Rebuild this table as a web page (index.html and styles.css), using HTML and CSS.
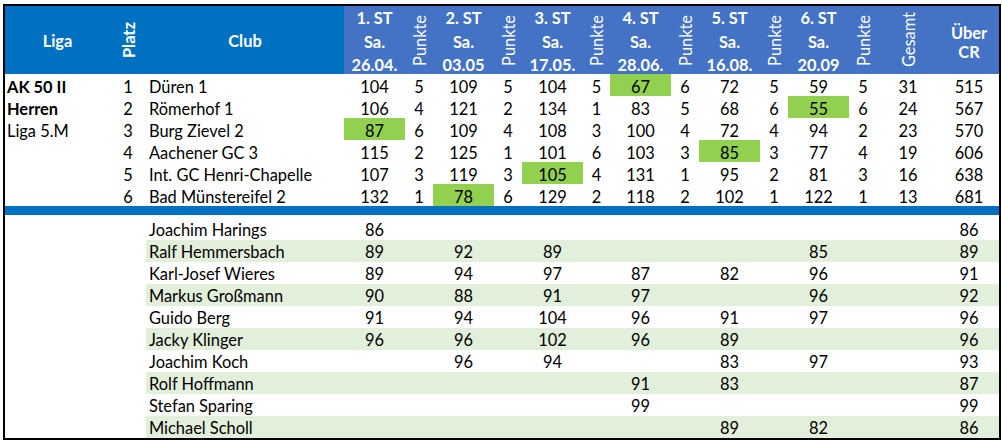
FILE: index.html
```html
<!DOCTYPE html>
<html lang="de">
<head>
<meta charset="utf-8">
<title>AK 50 II Herren Liga 5.M</title>
<link rel="stylesheet" href="styles.css">
</head>
<body>
<div class="sheet">
<table class="grid">
<colgroup>
<col class="w-liga"><col class="w-platz"><col class="w-club">
<col class="w-st"><col class="w-p"><col class="w-st"><col class="w-p"><col class="w-st"><col class="w-p27">
<col class="w-st"><col class="w-p"><col class="w-st"><col class="w-p"><col class="w-st"><col class="w-p">
<col class="w-ges"><col class="w-cr">
</colgroup>
<thead>
<tr class="head">
<th class="dk">Liga</th>
<th class="dk"><span class="rot">Platz</span></th>
<th class="dk">Club</th>
<th class="lt st"><div class="stack">1. ST<br>Sa.<br>26.04.</div></th>
<th class="lt"><span class="rot thin">Punkte</span></th>
<th class="lt st"><div class="stack">2. ST<br>Sa.<br>03.05</div></th>
<th class="lt"><span class="rot thin">Punkte</span></th>
<th class="lt st"><div class="stack">3. ST<br>Sa.<br>17.05.</div></th>
<th class="lt"><span class="rot thin">Punkte</span></th>
<th class="lt st"><div class="stack">4. ST<br>Sa.<br>28.06.</div></th>
<th class="lt"><span class="rot thin">Punkte</span></th>
<th class="lt st"><div class="stack">5. ST<br>Sa.<br>16.08.</div></th>
<th class="lt"><span class="rot thin">Punkte</span></th>
<th class="lt st"><div class="stack">6. ST<br>Sa.<br>20.09</div></th>
<th class="lt"><span class="rot thin">Punkte</span></th>
<th class="lt"><span class="rot thin">Gesamt</span></th>
<th class="lt cr">Über<br>CR</th>
</tr>
</thead>
<tbody class="teams">
<tr><td class="liga b">AK 50 II</td><td>1</td><td class="name">Düren 1</td><td>104</td><td>5</td><td>109</td><td>5</td><td>104</td><td>5</td><td class="hl">67</td><td>6</td><td>72</td><td>5</td><td>59</td><td>5</td><td>31</td><td>515</td></tr>
<tr><td class="liga b">Herren</td><td>2</td><td class="name">Römerhof 1</td><td>106</td><td>4</td><td>121</td><td>2</td><td>134</td><td>1</td><td>83</td><td>5</td><td>68</td><td>6</td><td class="hl">55</td><td>6</td><td>24</td><td>567</td></tr>
<tr><td class="liga">Liga 5.M</td><td>3</td><td class="name">Burg Zievel 2</td><td class="hl">87</td><td>6</td><td>109</td><td>4</td><td>108</td><td>3</td><td>100</td><td>4</td><td>72</td><td>4</td><td>94</td><td>2</td><td>23</td><td>570</td></tr>
<tr><td class="liga"></td><td>4</td><td class="name">Aachener GC 3</td><td>115</td><td>2</td><td>125</td><td>1</td><td>101</td><td>6</td><td>103</td><td>3</td><td class="hl">85</td><td>3</td><td>77</td><td>4</td><td>19</td><td>606</td></tr>
<tr><td class="liga"></td><td>5</td><td class="name">Int. GC Henri-Chapelle</td><td>107</td><td>3</td><td>119</td><td>3</td><td class="hl">105</td><td>4</td><td>131</td><td>1</td><td>95</td><td>2</td><td>81</td><td>3</td><td>16</td><td>638</td></tr>
<tr><td class="liga"></td><td>6</td><td class="name">Bad Münstereifel 2</td><td>132</td><td>1</td><td class="hl">78</td><td>6</td><td>129</td><td>2</td><td>118</td><td>2</td><td>102</td><td>1</td><td>122</td><td>1</td><td>13</td><td>681</td></tr>
</tbody>
<tbody class="players">
<tr class="bar"><td colspan="17"></td></tr>
<tr class="first"><td></td><td></td><td class="name">Joachim Harings</td><td>86</td><td></td><td></td><td></td><td></td><td></td><td></td><td></td><td></td><td></td><td></td><td></td><td></td><td>86</td></tr>
<tr class="stripe"><td></td><td></td><td class="name">Ralf Hemmersbach</td><td>89</td><td></td><td>92</td><td></td><td>89</td><td></td><td></td><td></td><td></td><td></td><td>85</td><td></td><td></td><td>89</td></tr>
<tr><td></td><td></td><td class="name">Karl-Josef Wieres</td><td>89</td><td></td><td>94</td><td></td><td>97</td><td></td><td>87</td><td></td><td>82</td><td></td><td>96</td><td></td><td></td><td>91</td></tr>
<tr class="stripe"><td></td><td></td><td class="name">Markus Großmann</td><td>90</td><td></td><td>88</td><td></td><td>91</td><td></td><td>97</td><td></td><td></td><td></td><td>96</td><td></td><td></td><td>92</td></tr>
<tr><td></td><td></td><td class="name">Guido Berg</td><td>91</td><td></td><td>94</td><td></td><td>104</td><td></td><td>96</td><td></td><td>91</td><td></td><td>97</td><td></td><td></td><td>96</td></tr>
<tr class="stripe"><td></td><td></td><td class="name">Jacky Klinger</td><td>96</td><td></td><td>96</td><td></td><td>102</td><td></td><td>96</td><td></td><td>89</td><td></td><td></td><td></td><td></td><td>96</td></tr>
<tr><td></td><td></td><td class="name">Joachim Koch</td><td></td><td></td><td>96</td><td></td><td>94</td><td></td><td></td><td></td><td>83</td><td></td><td>97</td><td></td><td></td><td>93</td></tr>
<tr class="stripe"><td></td><td></td><td class="name">Rolf Hoffmann</td><td></td><td></td><td></td><td></td><td></td><td></td><td>91</td><td></td><td>83</td><td></td><td></td><td></td><td></td><td>87</td></tr>
<tr><td></td><td></td><td class="name">Stefan Sparing</td><td></td><td></td><td></td><td></td><td></td><td></td><td>99</td><td></td><td></td><td></td><td></td><td></td><td></td><td>99</td></tr>
<tr class="stripe"><td></td><td></td><td class="name">Michael Scholl</td><td></td><td></td><td></td><td></td><td></td><td></td><td></td><td></td><td>89</td><td></td><td>82</td><td></td><td></td><td>86</td></tr>
</tbody>
</table>
</div>
</body>
</html>
```
FILE: styles.css
```css
html, body {
  margin: 0;
  padding: 0;
  background: #ffffff;
}

body {
  font-family: Lato, "Open Sans", sans-serif;
  color: #000000;
}

.sheet {
  margin: 4px 0 0 3px;
  width: 994px;
  border: 2px solid #000000;
}

.grid {
  width: 994px;
  table-layout: fixed;
  border-collapse: collapse;
  border-spacing: 0;
}

.w-liga { width: 105px; }
.w-platz { width: 36px; }
.w-club { width: 198px; }
.w-st { width: 61px; }
.w-p { width: 28px; }
.w-p27 { width: 27px; }
.w-ges { width: 62px; }
.w-cr { width: 60px; }

.grid th,
.grid td {
  padding: 0;
  font-size: 16.4px;
  line-height: 19px;
  white-space: nowrap;
  text-align: center;
  overflow: visible;
}

/* header */
.head { height: 68px; }

.head th {
  color: #ffffff;
  font-weight: 700;
  vertical-align: middle;
}

.dk { background: #0070c0; }
.lt { background: #4472c4; }

.head th.st {
  vertical-align: top;
}

.stack {
  height: 68px;
  line-height: 23.6px;
}

.cr {
  line-height: 22px;
  padding-top: 4px !important;
}

.rot {
  display: inline-block;
  writing-mode: vertical-rl;
  transform: rotate(180deg);
  line-height: 19px;
  vertical-align: middle;
}

.thin { font-weight: 400; }

/* body rows */
.grid td {
  vertical-align: bottom;
}

.teams tr { height: 22px; }
.teams td { padding-bottom: 0; }

.players tr { height: 22px; }
.players td { padding-bottom: 1px; }
.players tr.first { height: 25px; }

.players tr.bar { height: 9px; }
.players tr.bar td {
  background: #0070c0;
  padding: 0;
  font-size: 0;
  line-height: 0;
}

.stripe td:nth-child(n+3) { background: #e2efda; }

.liga {
  text-align: left !important;
  padding-left: 2px !important;
}

.name {
  text-align: left !important;
  padding-left: 3px !important;
}

.b { font-weight: 700; }

.hl { background: #92d050; }
```
